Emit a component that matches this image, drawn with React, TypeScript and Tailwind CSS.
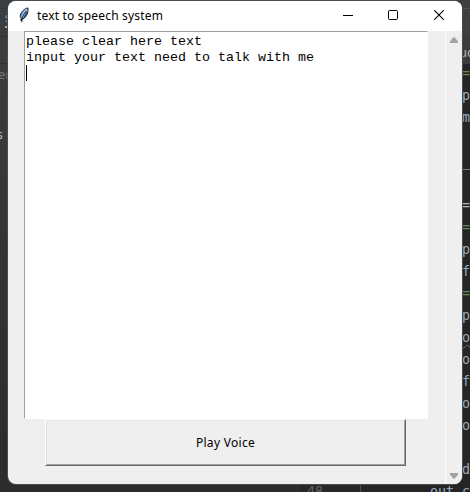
const codeLines = [
  { text: "=", color: "text-[#6a8759]" },
  { text: "p", color: "text-[#98a9be]" },
  { text: "m", color: "text-[#98a9be]" },
  { text: "", color: "" },
  { text: "_", color: "text-[#a9b7c6]" },
  { text: "", color: "" },
  { text: "=", color: "text-[#a9b7c6]" },
  { text: "=", color: "text-[#6a8759]" },
  { text: "p", color: "text-[#98a9be]" },
  { text: "f", color: "text-[#98a9be]" },
  { text: "=", color: "text-[#6a8759]" },
  { text: "p", color: "text-[#98a9be]" },
  { text: "o", color: "text-[#98a9be] underline decoration-wavy decoration-[#55805a] decoration-1 underline-offset-2" },
  { text: "o", color: "text-[#98a9be]" },
  { text: "f", color: "text-[#98a9be]" },
  { text: "o", color: "text-[#98a9be]" },
  { text: "o", color: "text-[#98a9be]" },
  { text: "", color: "" },
  { text: "d", color: "text-[#98a9be]" },
];

function EditorBackdrop() {
  return (
    <div className="flex h-full w-full bg-[#252525] font-['DejaVu_Sans_Mono',monospace] text-[13.3px]">
      <aside className="flex w-[301px] shrink-0 flex-col bg-gradient-to-b from-[#3c3f41] to-[#2b2c2d] to-90% font-['Noto_Sans',sans-serif] text-xs text-[#737577]">
        <div className="h-[9px] border-b border-[#333537]" />
        <div className="h-7 border-b border-[#303234] pl-[5px]">
          <span className="block h-[19px] w-4 border-b-2 border-[#a7acb0] leading-[18px] text-[#77a9cf]">s</span>
        </div>
        <div className="h-[27px] border-b border-[#2b2d2f]" />
        <div className="mt-[1px] -ml-[2px] h-[61px] text-[13px] leading-[19px]">er</div>
        <div className="-ml-[3px] leading-[18px] text-[#bbb]">s</div>
      </aside>
      <div className="flex min-w-0 flex-1 flex-col">
        <div className="h-[9px] shrink-0 border-b border-[#505254] bg-[#3c3f41]" />
        <div className="h-7 shrink-0 bg-[#3c4043]" />
        <div className="flex h-[27px] shrink-0 items-center overflow-hidden bg-[#3c3d38] pt-[3px] pl-[158px] font-['Noto_Sans',sans-serif] text-[13px] leading-6 text-[#b4b9bd]">uc</div>
        <div className="flex min-h-0 flex-1 overflow-hidden">
          <div className="flex w-[60px] shrink-0 flex-col justify-end border-r border-[#4b4b4b] bg-[#282828] pl-1.5 text-[#606366]">
            <div className="-mb-[11px] leading-[22px]">48</div>
          </div>
          <div className="-mt-px pl-[101px]">
            {codeLines.map((line, i) => (
              <div key={i} className={`h-[22px] leading-[22px] ${line.color}`}>{line.text}</div>
            ))}
            <div className="-ml-8 h-[22px] leading-[22px] whitespace-pre text-[#98a9be]">out c</div>
          </div>
        </div>
      </div>
    </div>
  );
}

function FeatherIcon() {
  return (
    <svg className="mb-[2px] h-4 w-3 shrink-0" viewBox="0 0 12 16">
      <path d="M2 14 2.2 11 1.2 9.4C1.4 6.2 4 2.2 8.8.9c.7 2.6-.2 7.3-3.5 10.2l-2 1.1Z" fill="#6b9ddb" stroke="#141a22" strokeWidth="1" />
      <path d="M7.8 2C5.3 4.2 4 6.7 3.2 10.5" fill="none" stroke="#b9d7fb" strokeWidth="1.3" />
      <path d="M7 4C4.5 7 3.2 10.5 2.7 15.3M5.2 11 8 5" fill="none" stroke="#17212c" strokeWidth=".9" />
    </svg>
  );
}

function TitleBar() {
  return (
    <header className="flex h-[30px] shrink-0 items-center bg-white pr-[18px] pl-[11px]">
      <FeatherIcon />
      <h1 className="ml-[6px] font-['Noto_Sans',sans-serif] text-xs leading-4 tracking-[0.18px] whitespace-nowrap">text to speech system</h1>
      <div className="mb-[2px] ml-auto flex items-center">
        <svg className="h-[10px] w-[10px]" viewBox="0 0 10 10"><path d="M0 5.5h10" stroke="#000" /></svg>
        <svg className="ml-[35px] h-[10px] w-[10px]" viewBox="0 0 10 10"><rect x=".5" y=".5" width="9" height="9" rx="1.2" fill="none" stroke="#000" /></svg>
        <svg className="ml-9 h-[10px] w-[10px]" viewBox="0 0 10 10"><path d="m.3.3 9.4 9.4m0-9.4L.3 9.7" stroke="#000" strokeWidth="1.1" /></svg>
      </div>
    </header>
  );
}

function ScrollBar() {
  return (
    <div className="flex w-[17px] shrink-0 flex-col items-center justify-between border-l border-white bg-[#efefef] pt-[6px] pb-[5px]">
      <svg className="h-[6px] w-2" viewBox="0 0 8 6"><path d="M3.3.3h1.4L8 4.5V6H0V4.5Z" fill="#a3a3a3" /></svg>
      <svg className="h-[6px] w-2" viewBox="0 0 8 6"><path d="M0 0h8v1.5L4.7 5.7H3.3L0 1.5Z" fill="#a3a3a3" /></svg>
    </div>
  );
}

export default function App() {
  return (
    <main className="relative h-[492px] w-[470px] overflow-hidden">
      <EditorBackdrop />
      <section className="absolute top-[1px] left-2 flex h-[483px] w-[454px] flex-col overflow-hidden rounded-[8px] bg-[#efefef] text-black shadow-[0_0_0_1px_#4a4c4e]">
        <TitleBar />
        <div className="flex min-h-0 flex-1">
          <div className="flex flex-1 flex-col pl-4">
            <div className="h-[388px] w-[404px] border border-t-[#a0a0a0] border-r-white border-b-white border-l-[#a0a0a0] bg-white pt-[2px] pl-[1px] font-['Liberation_Mono',monospace] text-[13.33px] leading-4 whitespace-pre">
              <div>please clear here text</div>
              <div>input your text need to talk with me</div>
              <div className="-mt-px h-4 w-px bg-black" />
            </div>
            <button className="ml-[21px] flex h-[47px] w-[361px] border-t border-r border-b border-l border-t-white border-r-[#696969] border-b-[#696969] border-l-white text-xs">
              <span className="flex h-full w-full items-center justify-center border border-t-[#e3e3e3] border-r-[#a0a0a0] border-b-[#a0a0a0] border-l-[#e3e3e3] pt-px font-['Noto_Sans',sans-serif] tracking-[0.3px]">Play Voice</span>
            </button>
          </div>
          <ScrollBar />
        </div>
      </section>
    </main>
  );
}
